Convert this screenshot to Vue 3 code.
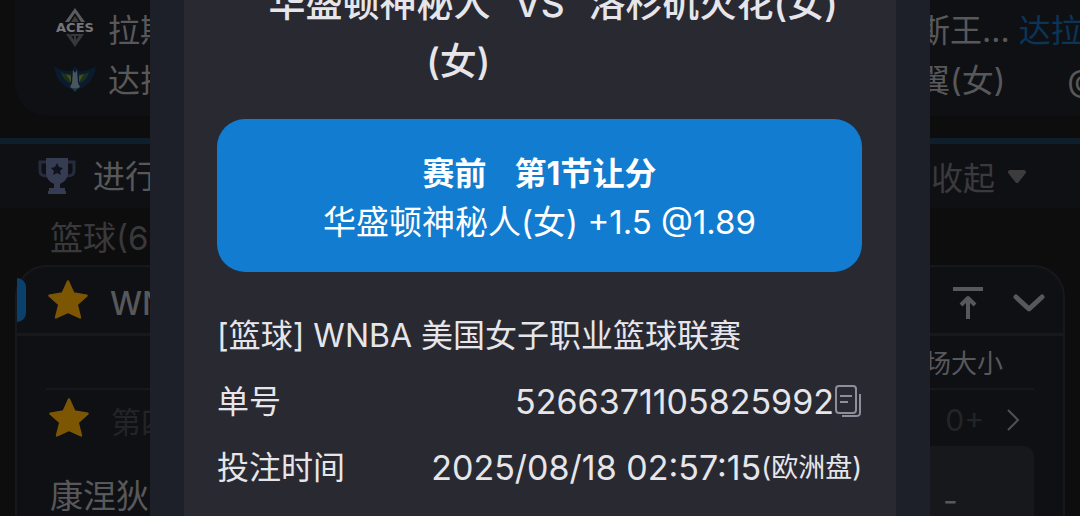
<script setup>
const bet = {
  home: '华盛顿神秘人(女)',
  away: '洛杉矶火花(女)',
  phase: '赛前',
  market: '第1节让分',
  pick: '华盛顿神秘人(女) +1.5 @1.89',
  league: '[篮球] WNBA 美国女子职业篮球联赛',
  id: '5266371105825992',
  time: '2025/08/18 02:57:15',
  odds: '(欧洲盘)'
}
</script>

<template>
  <div class="screen">
    <main class="page">
      <section class="match">
        <div class="line">
          <svg class="crest" viewBox="0 0 42 40" aria-hidden="true">
            <path d="M21 0 31 14H27L21 5 15 14H11Z" fill="#5c5c5f" />
            <path d="M21 8 25 14H17Z" fill="#3c3c3f" />
            <path d="M12 26H16L20 32V28H17V26H30L21 39ZM22 28V32L25 28Z" fill="#38383b" />
            <text x="21" y="24" text-anchor="middle" class="crest-text">ACES</text>
          </svg>
          <span class="name">拉斯</span>
          <span class="side">斯王... <a href="#" class="link">达拉</a></span>
        </div>
        <div class="line">
          <svg class="crest" viewBox="0 0 42 40" aria-hidden="true">
            <path d="M0 8Q8 14 17 13L21 8 25 13Q34 14 42 8 40 24 29 29L21 34 13 29Q2 24 0 8Z" fill="#0a1b2e" />
            <path d="M7 14Q12 17 17 16V25Q9 23 7 14ZM35 14Q30 17 25 16V25Q33 23 35 14Z" fill="#1c3020" />
            <path d="M12 16 17 18V24ZM30 16 25 18V24Z" fill="#454f1c" />
            <path d="M19 12 21 15 23 12 24 25 26 29 21 32 16 29 18 25Z" fill="#4a565e" />
            <path d="M19 30H23L21 34Z" fill="#174737" />
          </svg>
          <span class="name">达拉</span>
          <span class="side">翼(女)<span class="at">@</span></span>
        </div>
      </section>

      <section class="live">
        <svg class="trophy" viewBox="0 0 38 38" aria-hidden="true">
          <path d="M9 5H2V14Q2 19 9 19M29 5H36V14Q36 19 29 19" fill="none" stroke="#252c3e" stroke-width="3" />
          <path d="M8 1H30V17Q29 24 22 27V31H27V34H28V37H10V34H11V31H16V27Q9 24 8 17Z" fill="#363c52" />
          <path d="M19 6 21 10 25 11 22 14 23 18 19 16 15 18 16 14 13 11 17 10Z" fill="#10131c" />
        </svg>
        <span class="name">进行</span>
        <button class="fold">
          收起
          <svg class="caret" viewBox="0 0 20 16" aria-hidden="true"><path d="M3 4H17L10 13Z" fill="#3c3c3f" stroke="#3c3c3f" stroke-width="4" stroke-linejoin="round" /></svg>
        </button>
      </section>

      <h2 class="sport">篮球(6)</h2>

      <section class="league">
        <header class="league-head">
          <span class="pill"></span>
          <button class="star" aria-label="收藏联赛">
            <svg viewBox="0 0 40 40"><path d="M20 3 25 14 37 16 28 24 31 36 20 31 9 36 12 24 3 16 15 14Z" /></svg>
          </button>
          <span class="league-name">WNBA</span>
          <span class="tools">
            <button aria-label="置顶">
              <svg width="30" height="32" viewBox="0 0 30 32" fill="none" stroke="#58585b" stroke-width="4"><path d="M0 2H30M15 32V11M8 18 15 11 22 18" stroke-linejoin="round" /></svg>
            </button>
            <button aria-label="展开">
              <svg width="32" height="20" viewBox="0 0 32 20" fill="none" stroke="#58585b" stroke-width="5" stroke-linecap="round" stroke-linejoin="round"><path d="M3 4 16 16 29 4" /></svg>
            </button>
          </span>
        </header>
        <div class="columns">场大小</div>
        <div class="game">
          <button class="star" aria-label="收藏比赛">
            <svg viewBox="0 0 40 40"><path d="M20 3 25 14 37 16 28 24 31 36 20 31 9 36 12 24 3 16 15 14Z" /></svg>
          </button>
          <span class="period">第四</span>
          <button class="more">
            0+
            <svg width="14" height="24" viewBox="0 0 14 24" fill="none" stroke="#505053" stroke-width="2"><path d="M2 2 12 12 2 22" /></svg>
          </button>
        </div>
        <div class="teams">
          <span class="team">康涅狄</span>
          <button class="odd">-</button>
        </div>
      </section>
    </main>

    <div class="modal" role="dialog" aria-label="注单详情">
      <article class="slip">
        <h1 class="title">
          <span class="home">{{ bet.home }}</span>
          <span>VS</span>
          <span class="away">{{ bet.away }}</span>
        </h1>
        <div class="pick">
          <strong><span>{{ bet.phase }}</span><span>{{ bet.market }}</span></strong>
          <span>{{ bet.pick }}</span>
        </div>
        <p class="row">{{ bet.league }}</p>
        <div class="row">
          <span>单号</span>
          <span class="value">{{ bet.id }}<button class="copy" aria-label="复制单号">
            <svg width="28" height="34" viewBox="0 0 28 34" fill="none" stroke="#8d8d9c" stroke-width="2"><rect x="2" y="1" width="20" height="27" rx="3" /><path d="M6 11H18M6 17H14M26 9V28Q26 31 22 31H8" /></svg>
          </button></span>
        </div>
        <div class="row">
          <span>投注时间</span>
          <span class="value">{{ bet.time }}<small>{{ bet.odds }}</small></span>
        </div>
      </article>
    </div>
  </div>
</template>

<style>
body { margin: 0; background: #0d0d0e; }
</style>

<style scoped>
* { box-sizing: border-box; }
.screen {
  position: relative;
  height: 100vh;
  overflow: hidden;
  font-family: Inter, "Noto Sans CJK SC", sans-serif;
  font-size: 32px;
  color: #58585b;
  white-space: nowrap;
}
button { padding: 0; border: 0; background: none; font: inherit; color: inherit; display: flex; align-items: center; }
h1, h2, p { margin: 0; font-weight: 400; }
svg { display: block; flex: none; }
.match {
  margin-left: 15px;
  padding: 3px 0 13px 39px;
  background: #0f1014;
  border-radius: 0 0 0 32px;
}
.line { display: flex; align-items: center; height: 50px; }
.crest { width: 42px; height: 40px; overflow: visible; }
.crest-text { font: 700 13px "DejaVu Sans", sans-serif; fill: #77777a; }
.match .name { margin-left: 12px; }
.side { margin-left: auto; width: 162px; }
.link { color: #0a3557; text-decoration: none; }
.at { margin-left: 62px; }
.live {
  display: flex;
  align-items: center;
  height: 70px;
  margin-top: 22px;
  padding: 0 53px 0 38px;
  border-top: 6px solid #0f1e2b;
  background: #0f1014;
}
.trophy { width: 38px; height: 38px; }
.live .name { margin-left: 17px; padding-bottom: 4px; }
.fold { margin-left: auto; gap: 12px; color: #3a3a3d; }
.caret { width: 20px; height: 16px; }
.sport { padding: 3px 0 0 50px; line-height: 54px; font-size: 33px; color: #39393b; }
.league {
  margin: 0 15px;
  height: 300px;
  border: 2px solid #17181b;
  border-radius: 32px;
  background: #0f1014;
}
.league-head { display: flex; align-items: center; height: 69px; border-bottom: 3px solid #17181b; }
.pill { width: 9px; height: 44px; border-radius: 0 9px 9px 0; background: #0a416c; }
.star { width: 44px; height: 44px; margin-left: 20px; }
.star svg { width: 44px; height: 44px; fill: #7d5604; stroke: #7d5604; stroke-width: 2; stroke-linejoin: round; }
.league-name { margin-left: 20px; padding-top: 6px; font-weight: 500; }
.tools { display: flex; align-items: center; gap: 30px; margin: 0 18px 0 auto; padding-top: 6px; }
.columns {
  margin: 0 29px;
  padding: 4px 31px 0 0;
  line-height: 48px;
  border-bottom: 2px solid #17181b;
  font-size: 26px;
  text-align: right;
}
.game { display: flex; align-items: center; height: 56px; padding: 0 43px 0 10px; color: #242427; font-size: 30px; }
.period { margin-left: 20px; padding-top: 4px; }
.more { margin-left: auto; padding-top: 4px; gap: 22px; }
.teams { display: flex; justify-content: space-between; align-items: flex-start; padding: 0 29px 0 33px; }
.team { line-height: 100px; font-size: 33px; }
.odd {
  width: 170px;
  height: 100px;
  padding: 8px 0 0 79px;
  border-radius: 10px;
  background: #17181b;
}
.modal {
  position: absolute;
  inset: 0 150px;
  display: flex;
  align-items: flex-end;
  padding: 0 34px;
  background: #1e2029;
}
.slip { flex: 1; padding: 0 34px 15px 33px; background: #292932; color: #e6e6ea; }
.title {
  display: grid;
  grid-template-columns: 1fr auto 1fr;
  gap: 24px;
  font-size: 37px;
  line-height: 58px;
  font-weight: 500;
}
/* a club name breaks before its bracket and stays flush with the VS */
.home { padding-left: 4px; text-align: right; white-space: normal; }
.pick {
  display: flex;
  flex-direction: column;
  align-items: center;
  margin: 28px 0 31px;
  padding: 31px 0 26px;
  border-radius: 28px;
  background: #127cd0;
  color: #fff;
  font-size: 33px;
  line-height: 48px;
}
.pick strong { display: flex; gap: 28px; font-size: 32px; }
.row { display: flex; justify-content: space-between; align-items: center; line-height: 66px; }
.value { display: flex; align-items: center; font-size: 34px; }
small { font-size: 27px; }
</style>
